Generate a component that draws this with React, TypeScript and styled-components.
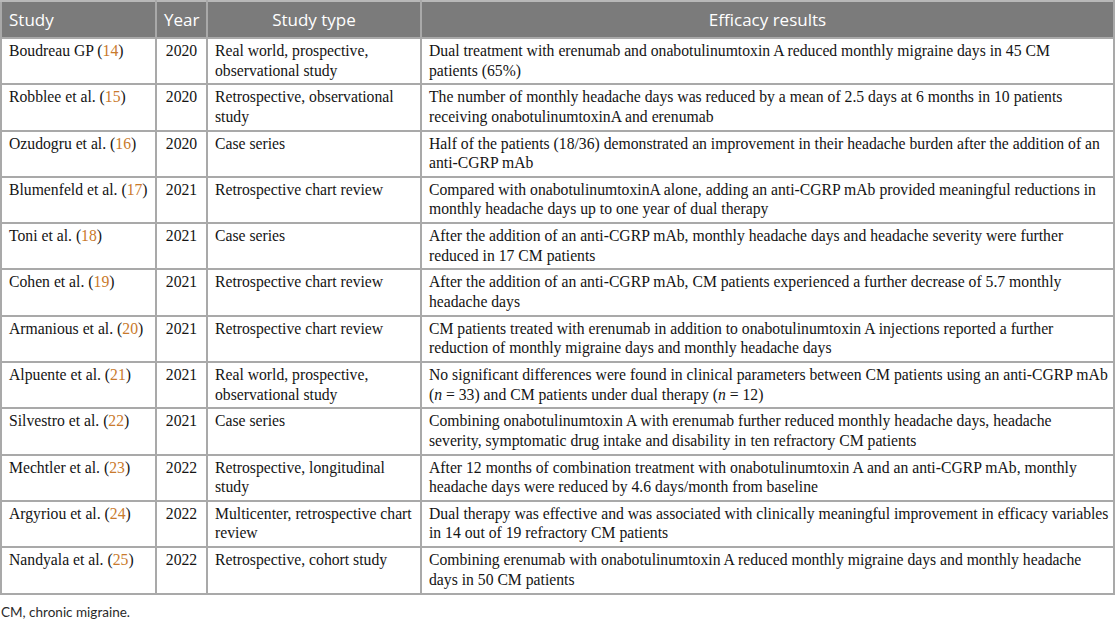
import React from 'react'
import styled, { createGlobalStyle } from 'styled-components'

const GlobalStyle = createGlobalStyle`
  html, body {
    margin: 0;
    padding: 0;
    background: #ffffff;
  }
`

const Page = styled.div`
  width: 1116px;
`

const Table = styled.table`
  width: 1115px;
  border-collapse: collapse;
  table-layout: fixed;
  border: 2px solid #a9a9a9;
`

const HeadCell = styled.th<{ $align?: 'left' | 'center' }>`
  background: #7b7b7b;
  color: #ffffff;
  font-family: 'Open Sans', 'Noto Sans', sans-serif;
  font-weight: 400;
  font-size: 17px;
  height: 35px;
  padding: 0 7px;
  text-align: ${(p) => p.$align || 'center'};
  border: 2px solid #a9a9a9;
  border-top-color: #b8b8b8;
`

const Cell = styled.td<{ $align?: 'left' | 'center' }>`
  font-family: 'Liberation Serif', 'Times New Roman', serif;
  font-size: 15.7px;
  line-height: 19.5px;
  color: #141414;
  vertical-align: top;
  padding: 2px 7px 3px;
  height: 39.3px;
  text-align: ${(p) => p.$align || 'left'};
  border: 2px solid #a9a9a9;
  white-space: nowrap;
`

const Line = styled.span`
  display: block;
`

const Ref = styled.span`
  color: #c97a2c;
`

const Note = styled.div`
  font-family: Lato, 'Open Sans', sans-serif;
  font-size: 13.5px;
  color: #2a2a2a;
  padding: 9px 1px 0;
`

type Row = {
  author: string
  ref: number
  year: number
  type: string[]
  result: React.ReactNode[]
}

const rows: Row[] = [
  {
    author: 'Boudreau GP',
    ref: 14,
    year: 2020,
    type: ['Real world, prospective,', 'observational study'],
    result: [
      'Dual treatment with erenumab and onabotulinumtoxin A reduced monthly migraine days in 45 CM',
      'patients (65%)',
    ],
  },
  {
    author: 'Robblee et al.',
    ref: 15,
    year: 2020,
    type: ['Retrospective, observational', 'study'],
    result: [
      'The number of monthly headache days was reduced by a mean of 2.5 days at 6 months in 10 patients',
      'receiving onabotulinumtoxinA and erenumab',
    ],
  },
  {
    author: 'Ozudogru et al.',
    ref: 16,
    year: 2020,
    type: ['Case series'],
    result: [
      'Half of the patients (18/36) demonstrated an improvement in their headache burden after the addition of an',
      'anti-CGRP mAb',
    ],
  },
  {
    author: 'Blumenfeld et al.',
    ref: 17,
    year: 2021,
    type: ['Retrospective chart review'],
    result: [
      'Compared with onabotulinumtoxinA alone, adding an anti-CGRP mAb provided meaningful reductions in',
      'monthly headache days up to one year of dual therapy',
    ],
  },
  {
    author: 'Toni et al.',
    ref: 18,
    year: 2021,
    type: ['Case series'],
    result: [
      'After the addition of an anti-CGRP mAb, monthly headache days and headache severity were further',
      'reduced in 17 CM patients',
    ],
  },
  {
    author: 'Cohen et al.',
    ref: 19,
    year: 2021,
    type: ['Retrospective chart review'],
    result: [
      'After the addition of an anti-CGRP mAb, CM patients experienced a further decrease of 5.7 monthly',
      'headache days',
    ],
  },
  {
    author: 'Armanious et al.',
    ref: 20,
    year: 2021,
    type: ['Retrospective chart review'],
    result: [
      'CM patients treated with erenumab in addition to onabotulinumtoxin A injections reported a further',
      'reduction of monthly migraine days and monthly headache days',
    ],
  },
  {
    author: 'Alpuente et al.',
    ref: 21,
    year: 2021,
    type: ['Real world, prospective,', 'observational study'],
    result: [
      'No significant differences were found in clinical parameters between CM patients using an anti-CGRP mAb',
      <>
        (<i>n</i> = 33) and CM patients under dual therapy (<i>n</i> = 12)
      </>,
    ],
  },
  {
    author: 'Silvestro et al.',
    ref: 22,
    year: 2021,
    type: ['Case series'],
    result: [
      'Combining onabotulinumtoxin A with erenumab further reduced monthly headache days, headache',
      'severity, symptomatic drug intake and disability in ten refractory CM patients',
    ],
  },
  {
    author: 'Mechtler et al.',
    ref: 23,
    year: 2022,
    type: ['Retrospective, longitudinal', 'study'],
    result: [
      'After 12 months of combination treatment with onabotulinumtoxin A and an anti-CGRP mAb, monthly',
      'headache days were reduced by 4.6 days/month from baseline',
    ],
  },
  {
    author: 'Argyriou et al.',
    ref: 24,
    year: 2022,
    type: ['Multicenter, retrospective chart', 'review'],
    result: [
      'Dual therapy was effective and was associated with clinically meaningful improvement in efficacy variables',
      'in 14 out of 19 refractory CM patients',
    ],
  },
  {
    author: 'Nandyala et al.',
    ref: 25,
    year: 2022,
    type: ['Retrospective, cohort study'],
    result: [
      'Combining erenumab with onabotulinumtoxin A reduced monthly migraine days and monthly headache',
      'days in 50 CM patients',
    ],
  },
]

export default function App() {
  return (
    <Page>
      <GlobalStyle />
      <Table>
        <colgroup>
          <col style={{ width: 155 }} />
          <col style={{ width: 51 }} />
          <col style={{ width: 214 }} />
          <col />
        </colgroup>
        <thead>
          <tr>
            <HeadCell $align="left">Study</HeadCell>
            <HeadCell>Year</HeadCell>
            <HeadCell>Study type</HeadCell>
            <HeadCell>Efficacy results</HeadCell>
          </tr>
        </thead>
        <tbody>
          {rows.map((r) => (
            <tr key={r.ref}>
              <Cell>
                {r.author} (<Ref>{r.ref}</Ref>)
              </Cell>
              <Cell $align="center">{r.year}</Cell>
              <Cell>
                {r.type.map((t, i) => (
                  <Line key={i}>{t}</Line>
                ))}
              </Cell>
              <Cell>
                {r.result.map((t, i) => (
                  <Line key={i}>{t}</Line>
                ))}
              </Cell>
            </tr>
          ))}
        </tbody>
      </Table>
      <Note>CM, chronic migraine.</Note>
    </Page>
  )
}
